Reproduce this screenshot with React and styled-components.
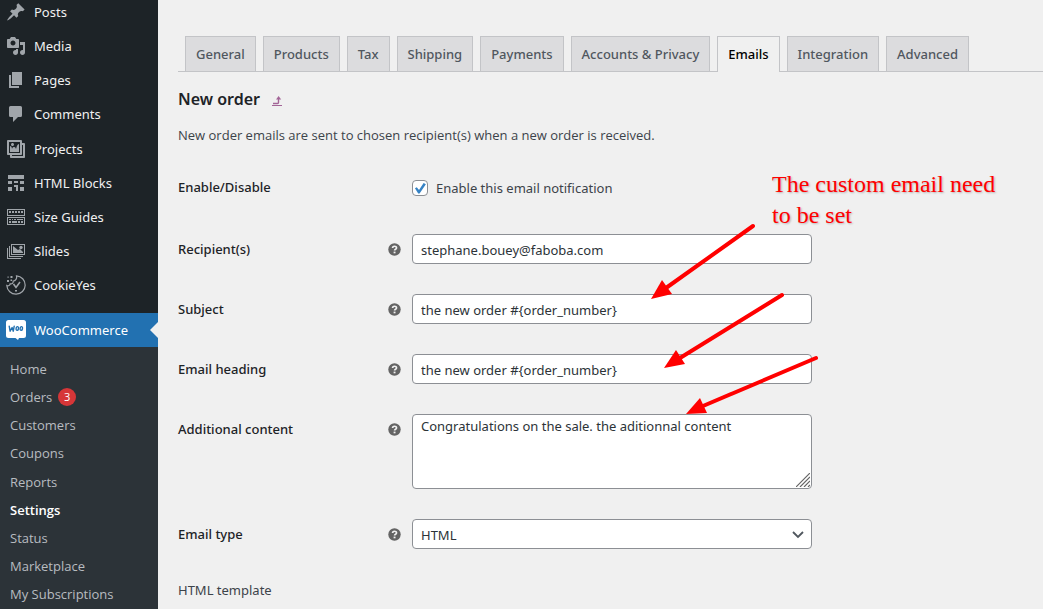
import React from "react";
import styled, { createGlobalStyle, css } from "styled-components";

const GlobalStyle = createGlobalStyle`
  *, *::before, *::after { box-sizing: border-box; }
  body {
    margin: 0;
    background: #f0f0f0;
    color: #3c434a;
    font-family: "Noto Sans", "Open Sans", sans-serif;
    font-size: 13px;
    line-height: 20px;
  }
  a { text-decoration: none; color: inherit; }
  ul { list-style: none; margin: 0; padding: 0; }
`;

const Page = styled.div`
  position: relative;
  display: flex;
  min-height: 100vh;
  overflow: hidden;
`;

const Sidebar = styled.nav`
  flex: 0 0 158px;
  margin-top: -5px;
  background: #1d2327;
  display: flex;
  flex-direction: column;
`;

const MenuGroup = styled.ul`
  margin-bottom: ${(p) => p.$gap}px;
`;

const MenuLink = styled.a`
  position: relative;
  display: flex;
  align-items: center;
  gap: 8px;
  height: 34px;
  padding-left: 6px;
  color: ${(p) => (p.$current ? "#fff" : "#f0f0f1")};
  background: ${(p) => (p.$current ? "#2271b1" : "transparent")};

  svg {
    flex: none;
    width: 20px;
    height: 20px;
    fill: ${(p) => (p.$current ? "#fff" : "#a0a5aa")};
  }

  ${(p) =>
    p.$current &&
    css`
      &::after {
        content: "";
        position: absolute;
        right: 0;
        top: 9px;
        border: 8px solid transparent;
        border-left-width: 0;
        border-right-color: #f0f0f0;
      }
    `}
`;

const Submenu = styled.div`
  flex: 1;
  padding: 8px 0 0;
  background: #2c3338;
`;

const SubmenuLink = styled.a`
  display: flex;
  align-items: center;
  gap: 6px;
  height: 28px;
  padding-left: 10px;
  font-family: "Open Sans", "Noto Sans", sans-serif;
  font-size: 13px;
  color: ${(p) => (p.$current ? "#fff" : "#b8bcc0")};
  font-weight: ${(p) => (p.$current ? 600 : 400)};
`;

const CountBadge = styled.span`
  display: flex;
  align-items: center;
  justify-content: center;
  width: 18px;
  height: 18px;
  border-radius: 9px;
  background: #d63638;
  color: #fff;
  font-size: 11px;
`;

const Main = styled.main`
  flex: 1;
  min-width: 0;
  padding: 36px 0 0 20px;
`;

const TabBar = styled.nav`
  display: flex;
  gap: 7px;
  height: 36px;
  padding-left: 7px;
  border-bottom: 1px solid #c3c4c7;
`;

const Tab = styled.a`
  height: ${(p) => (p.$current ? 36 : 35)}px;
  padding: 7px 10px;
  border: 1px solid #c3c4c7;
  border-bottom: 0;
  background: ${(p) => (p.$current ? "#f0f0f0" : "#dcdcde")};
  color: ${(p) => (p.$current ? "#000" : "#50575e")};
  font-weight: 500;
  white-space: nowrap;
`;

const Title = styled.h2`
  display: flex;
  align-items: baseline;
  gap: 12px;
  margin: 15px 0 0;
  font-size: 16px;
  line-height: 24px;
  font-weight: 600;
  color: #1d2327;
`;

const BackLink = styled.a`
  display: flex;
  border-bottom: 1px solid #a36597;
  svg { width: 10px; height: 9px; }
`;

const Description = styled.p`
  margin: 14px 0 12px;
  font-family: "Open Sans", "Noto Sans", sans-serif;
`;

const FormRow = styled.div`
  display: grid;
  grid-template-columns: 200px 34px minmax(0, 400px);
  padding: ${(p) => (p.$last ? "15px 0 8px" : "15px 0")};
`;

const FieldLabel = styled.label`
  padding-top: 5px;
  font-weight: 500;
  color: #1d2327;
`;

const PlainLabel = styled.span`
  line-height: 22px;
`;

const HelpTip = styled.button`
  align-self: start;
  display: flex;
  margin: 9px 0 0 10px;
  width: 13px;
  height: 13px;
  padding: 0;
  border: 0;
  background: none;
`;

const control = css`
  width: 100%;
  border: 1px solid #8c8f94;
  border-radius: 4px;
  background: #fff;
  color: #2c3338;
  font: inherit;
`;

const TextInput = styled.input`
  ${control}
  height: 30px;
  padding: 2px 8px 0;
`;

const TextArea = styled.textarea`
  ${control}
  display: block;
  height: 75px;
  padding: 1px 8px;
  resize: none;
`;

const TextAreaWrap = styled.div`
  position: relative;
  svg {
    position: absolute;
    right: 2px;
    bottom: 2px;
    width: 14px;
    height: 14px;
  }
`;

const SelectWrap = styled.div`
  position: relative;
  svg {
    position: absolute;
    right: 7px;
    top: 8px;
    width: 14px;
    height: 14px;
  }
`;

const Select = styled.select`
  ${control}
  appearance: none;
  height: 30px;
  padding: 2px 24px 0 8px;
`;

const CheckLabel = styled.label`
  display: flex;
  align-items: center;
  gap: 8px;
  height: 32px;
`;

const Checkbox = styled.input`
  appearance: none;
  display: grid;
  place-items: center;
  width: 16px;
  height: 16px;
  margin: 0;
  border: 1px solid #8c8f94;
  border-radius: 4px;
  background: #fff;

  &:checked::before {
    content: "";
    width: 14px;
    height: 14px;
    background: #3582c4;
    clip-path: polygon(14% 52%, 27% 44%, 43% 64%, 76% 14%, 92% 24%, 47% 90%, 37% 90%);
  }
`;

const Note = styled.p`
  position: absolute;
  left: 772px;
  top: 169px;
  width: 240px;
  margin: 0;
  font-family: "Liberation Serif", "Times New Roman", serif;
  font-size: 24px;
  line-height: 31px;
  color: #f00;
  text-shadow: 1px 1px 2px rgba(0, 0, 0, 0.25);
`;

const Arrows = styled.svg`
  position: absolute;
  left: 640px;
  top: 220px;
  width: 190px;
  height: 200px;
  pointer-events: none;
`;

const icons = {
  posts: (
    <path d="M10.44 3.02l1.82-1.82 6.36 6.35-1.83 1.82c-1.05-.68-2.48-.57-3.41.36l-.75.75c-.92.93-1.04 2.35-.35 3.41l-1.83 1.82-2.41-2.41-2.8 2.79c-.42.42-3.38 2.71-3.8 2.29s1.86-3.39 2.28-3.81l2.79-2.79L4.1 9.36l1.83-1.82c1.05.69 2.48.57 3.4-.36l.75-.75c.93-.92 1.05-2.35.36-3.41z" />
  ),
  media: (
    <path d="M13 11V4c0-.55-.45-1-1-1h-1.67L9 1H5L3.67 3H2c-.55 0-1 .45-1 1v7c0 .55.45 1 1 1h10c.55 0 1-.45 1-1zM7 4.5c1.38 0 2.5 1.12 2.5 2.5S8.38 9.5 7 9.5 4.5 8.38 4.5 7 5.62 4.5 7 4.5zM14 6h5v10.5c0 1.38-1.12 2.5-2.5 2.5S14 17.88 14 16.5s1.12-2.5 2.5-2.5c.17 0 .34.02.5.05V9h-3V6zm-4 8.05V13h2v3.5c0 1.38-1.12 2.5-2.5 2.5S7 17.88 7 16.5 8.12 14 9.5 14c.17 0 .34.02.5.05z" />
  ),
  pages: <path d="M6 15V2h10v13H6zm-1 1h8v2H3V5h2v11z" />,
  comments: (
    <path d="M4.500 2h10A1.500 1.500 0 0 1 16 3.500v8a1.500 1.500 0 0 1-1.500 1.500H12l-5 5v-5H4.500A1.500 1.500 0 0 1 3 11.500v-8A1.500 1.500 0 0 1 4.500 2z" />
  ),
  projects: (
    <path d="M16 4h1.96c.57 0 1.04.47 1.04 1.04v12.92c0 .57-.47 1.04-1.04 1.04H5.04C4.47 19 4 18.53 4 17.96V16H2.04C1.47 16 1 15.53 1 14.96V2.04C1 1.47 1.47 1 2.04 1h12.92c.57 0 1.04.47 1.04 1.04V4zM3 14h11V3H3v11zm5-8.500C8 4.670 7.330 4 6.500 4S5 4.670 5 5.500 5.670 7 6.500 7 8 6.330 8 5.500zm2 4.500s1-5 3-5v8H4V7c2 0 2 3 2 3s.33-2 2-2 2 2 2 2zm7 7V6h-1v8.960c0 .57-.47 1.040-1.040 1.040H6v1h11z" />
  ),
  blocks: (
    <path d="M2 2h16v4H2zM2 8h4v3H2zM8 8h4v2H8zM14 8h4v3h-4zM2 14h4v4H2zM8 12h4v6h-2v-4H8zM14 14h4v4h-4z" />
  ),
  guides: (
    <g>
      <path fillRule="evenodd" d="M1 2h18v7H1zM2 3v5h16V3zM1 10h18v8H1zM2 11v6h16v-6z" />
      <path d="M3 4h2v2H3zM6 4h2v2H6zM9 4h2v2H9zM12 4h2v2h-2zM15 4h2v2h-2zM3 12h2v1H3zM6 12h1v1H6zM8 12h2v1H8zM11 12h6v1h-6zM3 14h2v2H3zM6 14h5v2H6zM12 14h2v2h-2zM15 14h2v2h-2z" />
    </g>
  ),
  slides: (
    <g>
      <path fillRule="evenodd" d="M5 3h14v11H5zM6 4v9h12V4z" />
      <path d="M3 5h1v10h13v1H3zM1 7h1v10h13v1H1z" />
      <path d="M7 5l5 4 2-1 3 3v1H7z" />
      <circle cx="15" cy="6.500" r="1.700" />
    </g>
  ),
  cookie: (
    <g>
      <path
        d="M10.500 .8A9.200 9.200 0 1 1 .8 10.500c1.500.8 3.200-.2 3.400-1.700 2 .3 3.400-1 3-2.800C9.500 6 11.300 3.500 10.500.8z"
        fill="none"
        stroke="#a0a5aa"
        strokeWidth="1.200"
      />
      <path d="M7.500 9l2.500 3.500L14 7" fill="none" stroke="#a0a5aa" strokeWidth="1.600" />
      <path d="M1 5h2v2H1zM4.500 1h2v2h-2zM1.500 1.500h1.200v1.200H1.500zM4.500 4.500h1.500V6H4.500zM9 15h2v1.500H9z" />
    </g>
  ),
  woo: (
    <g>
      <path d="M2.500 0h15A2.500 2.500 0 0 1 20 2.500v13a2.500 2.500 0 0 1-2.500 2.500H13l-1 2-2.500-2h-7A2.500 2.500 0 0 1 0 15.500v-13A2.500 2.500 0 0 1 2.500 0z" />
      <g fill="none" stroke="#2271b1" strokeWidth="1.400" strokeLinejoin="round" strokeLinecap="round">
        <path d="M3.200 6.200l.9 5 2-3.700 1.200 3.700.9-5" />
        <ellipse cx="11.300" cy="8.500" rx="1.200" ry="1.900" transform="rotate(12 11.300 8.500)" />
        <ellipse cx="15.300" cy="8.500" rx="1.200" ry="1.900" transform="rotate(12 15.300 8.500)" />
      </g>
    </g>
  ),
};

function Icon({ name }) {
  return (
    <svg viewBox="0 0 20 20" aria-hidden="true">
      {icons[name]}
    </svg>
  );
}

const contentMenu = [
  ["posts", "Posts"],
  ["media", "Media"],
  ["pages", "Pages"],
  ["comments", "Comments"],
];
const pluginMenu = [
  ["projects", "Projects"],
  ["blocks", "HTML Blocks"],
  ["guides", "Size Guides"],
  ["slides", "Slides"],
  ["cookie", "CookieYes"],
];
const storeSubmenu = ["Home", "Orders", "Customers", "Coupons"];
const adminSubmenu = ["Reports", "Settings", "Status", "Marketplace", "My Subscriptions"];
const tabs = [
  "General",
  "Products",
  "Tax",
  "Shipping",
  "Payments",
  "Accounts & Privacy",
  "Emails",
  "Integration",
  "Advanced",
];

function Menu({ items, gap }) {
  return (
    <MenuGroup $gap={gap}>
      {items.map(([icon, label]) => (
        <li key={label}>
          <MenuLink href="#">
            <Icon name={icon} />
            {label}
          </MenuLink>
        </li>
      ))}
    </MenuGroup>
  );
}

function SubmenuGroup({ items, gap }) {
  return (
    <MenuGroup $gap={gap}>
      {items.map((label) => (
        <li key={label}>
          <SubmenuLink href="#" $current={label === "Settings"}>
            {label}
            {label === "Orders" && <CountBadge>3</CountBadge>}
          </SubmenuLink>
        </li>
      ))}
    </MenuGroup>
  );
}

function Help() {
  return (
    <HelpTip type="button" aria-label="Help">
      <svg viewBox="0 0 13 13" width="13" height="13" aria-hidden="true">
        <circle cx="6.500" cy="6.500" r="6.200" fill="#646464" />
        <path
          d="M4.600 5.100c0-2.400 3.900-2.400 3.900-.2 0 1.400-1.900 1.300-1.900 2.700"
          fill="none"
          stroke="#f0f0f0"
          strokeWidth="1.700"
        />
        <rect x="5.600" y="8.600" width="1.900" height="1.700" fill="#f0f0f0" />
      </svg>
    </HelpTip>
  );
}

function Field({ id, label, children }) {
  return (
    <FormRow>
      <FieldLabel htmlFor={id}>{label}</FieldLabel>
      <Help />
      {children}
    </FormRow>
  );
}

export default function App() {
  return (
    <>
      <GlobalStyle />
      <Page>
        <Sidebar>
          <Menu items={contentMenu} gap={1} />
          <Menu items={pluginMenu} gap={11} />
          <MenuLink href="#" $current>
            <Icon name="woo" />
            WooCommerce
          </MenuLink>
          <Submenu>
            <SubmenuGroup items={storeSubmenu} gap={1} />
            <SubmenuGroup items={adminSubmenu} gap={0} />
          </Submenu>
        </Sidebar>

        <Main>
          <TabBar>
            {tabs.map((label) => (
              <Tab key={label} href="#" $current={label === "Emails"}>
                {label}
              </Tab>
            ))}
          </TabBar>

          <Title>
            New order
            <BackLink href="#" aria-label="Return to emails">
              <svg viewBox="0 0 10 9" aria-hidden="true">
                <path d="M1 7.500h4.500q1 0 1-1V3" fill="none" stroke="#a36597" strokeWidth="1.400" />
                <path d="M4 3.600L6.600 0l2.600 3.600z" fill="#a36597" />
              </svg>
            </BackLink>
          </Title>
          <Description>
            New order emails are sent to chosen recipient(s) when a new order is received.
          </Description>

          <form onSubmit={(e) => e.preventDefault()}>
            <FormRow>
              <FieldLabel htmlFor="enabled">Enable/Disable</FieldLabel>
              <span />
              <CheckLabel>
                <Checkbox id="enabled" type="checkbox" defaultChecked />
                Enable this email notification
              </CheckLabel>
            </FormRow>
            <Field id="recipient" label="Recipient(s)">
              <TextInput id="recipient" type="text" defaultValue="stephane.bouey@faboba.com" />
            </Field>
            <Field id="subject" label="Subject">
              <TextInput id="subject" type="text" defaultValue="the new order #{order_number}" />
            </Field>
            <Field id="heading" label="Email heading">
              <TextInput id="heading" type="text" defaultValue="the new order #{order_number}" />
            </Field>
            <Field id="additional" label="Additional content">
              <TextAreaWrap>
                <TextArea
                  id="additional"
                  defaultValue="Congratulations on the sale. the aditionnal content"
                />
                <svg viewBox="0 0 14 14" aria-hidden="true">
                  <path d="M0 14L14 0M4 14L14 4M8 14l6-6M12 14l2-2" stroke="#666" strokeWidth="1.200" />
                </svg>
              </TextAreaWrap>
            </Field>
            <Field id="type" label="Email type">
              <SelectWrap>
                <Select id="type" defaultValue="HTML">
                  <option>HTML</option>
                </Select>
                <svg viewBox="0 0 14 14" aria-hidden="true">
                  <path d="M2 5l5 5 5-5" fill="none" stroke="#50575e" strokeWidth="1.800" />
                </svg>
              </SelectWrap>
            </Field>
            <FormRow $last>
              <PlainLabel>HTML template</PlainLabel>
            </FormRow>
          </form>
        </Main>

        <Note>The custom email need to be set</Note>
        <Arrows viewBox="640 220 190 200" aria-hidden="true">
          <g stroke="#f00" strokeWidth="4" strokeLinecap="round">
            <path d="M753 226L666 288" />
            <path d="M782 295L680 358" />
            <path d="M816 358L703 406" />
          </g>
          <g fill="#f00">
            <path d="M651 299L662 280L672 294z" />
            <path d="M664 368L676 350L685 364z" />
            <path d="M686 414L700 398L707 413z" />
          </g>
        </Arrows>
      </Page>
    </>
  );
}
